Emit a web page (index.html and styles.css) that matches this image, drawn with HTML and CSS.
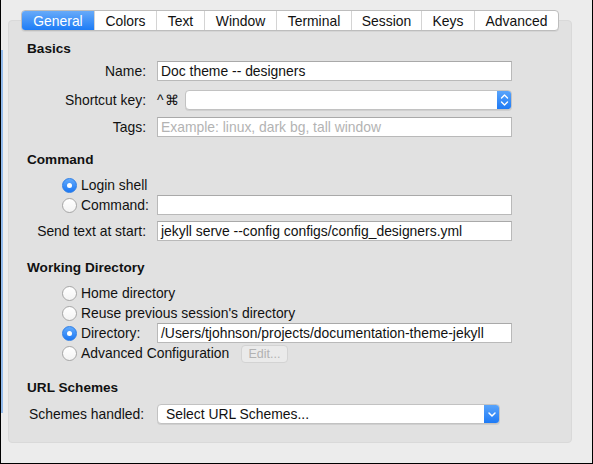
FILE: index.html
```html
<!DOCTYPE html>
<html>
<head>
<meta charset="utf-8">
<link rel="stylesheet" href="styles.css">
</head>
<body>
<div class="window">
  <div class="edge-accent"></div>
  <nav class="tabs">
    <span class="tab active t-general">General</span>
    <span class="tab t-colors">Colors</span>
    <span class="tab t-text">Text</span>
    <span class="tab t-window">Window</span>
    <span class="tab t-terminal">Terminal</span>
    <span class="tab t-session">Session</span>
    <span class="tab t-keys">Keys</span>
    <span class="tab t-advanced">Advanced</span>
  </nav>
  <section class="panel">
    <h2 class="heading h-basics">Basics</h2>
    <div class="row r-name">
      <span class="lbl">Name:</span>
      <div class="field">Doc theme -- designers</div>
    </div>
    <div class="row r-shortcut">
      <span class="lbl">Shortcut key:</span>
      <span class="mods">^⌘</span>
      <div class="popup popup-short">
        <span class="popup-text"></span>
        <span class="stepper">
          <svg width="15" height="20" viewBox="0 0 15 20"><path d="M4.5 8 L7.5 5 L10.5 8 M4.5 12 L7.5 15 L10.5 12" fill="none" stroke="#fff" stroke-width="1.4" stroke-linecap="round" stroke-linejoin="round"/></svg>
        </span>
      </div>
    </div>
    <div class="row r-tags">
      <span class="lbl">Tags:</span>
      <div class="field placeholder">Example: linux, dark bg, tall window</div>
    </div>

    <h2 class="heading h-command">Command</h2>
    <div class="row r-login">
      <span class="radio-lead"><span class="radio on"></span><span class="rlabel">Login shell</span></span>
    </div>
    <div class="row r-cmd">
      <span class="radio-lead w-input"><span class="radio"></span><span class="rlabel">Command:</span></span>
      <div class="field"></div>
    </div>
    <div class="row r-send">
      <span class="lbl">Send text at start:</span>
      <div class="field">jekyll serve --config configs/config_designers.yml</div>
    </div>

    <h2 class="heading h-wd">Working Directory</h2>
    <div class="row r-home">
      <span class="radio-lead"><span class="radio"></span><span class="rlabel">Home directory</span></span>
    </div>
    <div class="row r-reuse">
      <span class="radio-lead"><span class="radio"></span><span class="rlabel">Reuse previous session's directory</span></span>
    </div>
    <div class="row r-dir">
      <span class="radio-lead w-input"><span class="radio on"></span><span class="rlabel">Directory:</span></span>
      <div class="field">/Users/tjohnson/projects/documentation-theme-jekyll</div>
    </div>
    <div class="row r-adv">
      <span class="radio-lead w-adv"><span class="radio"></span><span class="rlabel">Advanced Configuration</span></span>
      <span class="btn-disabled">Edit...</span>
    </div>

    <h2 class="heading h-url">URL Schemes</h2>
    <div class="row r-schemes">
      <span class="lbl-left">Schemes handled:</span>
      <div class="popup popup-schemes">
        <span class="popup-text">Select URL Schemes...</span>
        <span class="stepper wide">
          <svg width="16" height="20" viewBox="0 0 16 20"><path d="M5 9 L8 12 L11 9" fill="none" stroke="#fff" stroke-width="1.5" stroke-linecap="round" stroke-linejoin="round"/></svg>
        </span>
      </div>
    </div>
  </section>
</div>
</body>
</html>
```
FILE: styles.css
```css
* { box-sizing: border-box; }
html, body { margin: 0; padding: 0; }
body {
  font-family: "Liberation Sans", Arial, sans-serif;
  font-size: 13.9px;
  color: #111;
  background: #ececec;
}
.window {
  position: relative;
  width: 593px;
  height: 464px;
  background: #ececec;
  border-left: 1px solid #000;
  border-right: 1px solid #000;
  border-bottom: 1px solid #000;
  padding-top: 10px;
}
.edge-accent {
  position: absolute;
  left: 0;
  top: 50px;
  width: 2px;
  height: 363px;
  background: #93bbec;
}
.tabs {
  position: relative;
  z-index: 1;
  display: flex;
  margin-left: 20px;
  width: 538px;
  height: 21px;
  background: #fff;
  border: 1px solid #bdbdbd;
  border-radius: 4px;
  overflow: hidden;
  box-shadow: 0 1px 0 rgba(0,0,0,0.05);
}
.tab {
  display: flex;
  align-items: center;
  justify-content: center;
  height: 100%;
  border-left: 1px solid #d4d4d4;
  font-size: 13.9px;
  color: #111;
}
.tab:first-child { border-left: none; }
.tab.active {
  background: linear-gradient(#67aaf9, #1d7cf6);
  color: #fff;
}
.t-general { width: 72px; }
.t-colors { width: 62px; }
.t-text { width: 48px; }
.t-window { width: 72px; }
.t-terminal { width: 75px; }
.t-session { width: 70px; }
.t-keys { width: 53px; }
.t-advanced { flex: 1; }

.panel {
  margin-top: -11px;
  margin-left: 7px;
  width: 564px;
  height: 423px;
  background: #e1e1e1;
  border: 1px solid #d9d9d9;
  border-radius: 4px;
  display: flex;
  flex-direction: column;
}
.heading {
  margin: 0 0 0 18px;
  height: 16px;
  line-height: 16px;
  font-size: 13.6px;
  font-weight: bold;
  color: #111;
}
.row {
  display: flex;
  align-items: center;
  height: 20px;
}
.lbl {
  width: 137px;
  margin-right: 11px;
  text-align: right;
  white-space: nowrap;
}
.field {
  width: 355px;
  height: 20px;
  background: #fff;
  border: 1px solid #b9b9b9;
  border-top-color: #a9a9a9;
  padding: 0 3px;
  line-height: 18px;
  white-space: nowrap;
  overflow: hidden;
}
.placeholder { color: #b3b3b3; }
.mods {
  width: 28px;
  padding-left: 0;
  letter-spacing: 1px;
}
.popup {
  display: flex;
  height: 20px;
  background: #fff;
  border: 1px solid #c2c2c2;
  border-radius: 4px;
  overflow: hidden;
  box-shadow: 0 1px 0 rgba(0,0,0,0.08);
}
.popup-text { flex: 1; padding-left: 8px; line-height: 18px; white-space: nowrap; }
.popup-short { width: 327px; }
.popup-schemes { width: 343px; }
.stepper {
  width: 15px;
  height: 20px;
  margin-top: -1px;
  margin-right: -1px;
  background: linear-gradient(#5ca6fb, #1b78f5);
  display: flex;
  align-items: center;
  justify-content: center;
}
.stepper.wide { width: 16px; }
.stepper svg { display: block; }

.radio-lead {
  display: flex;
  align-items: center;
  padding-left: 53px;
  white-space: nowrap;
}
.w-input { width: 148px; }
.w-adv { width: 232px; }
.radio {
  width: 15px;
  height: 15px;
  border-radius: 50%;
  background: linear-gradient(#ffffff, #f3f3f3);
  border: 1px solid #a6a6a6;
  margin-right: 4px;
  position: relative;
  flex: none;
}
.radio.on {
  background: linear-gradient(#62aafc, #1c78f4);
  border-color: #2d7ee6;
}
.radio.on::after {
  content: "";
  position: absolute;
  left: 4px;
  top: 4px;
  width: 5px;
  height: 5px;
  border-radius: 50%;
  background: #fff;
}
.btn-disabled {
  width: 47px;
  height: 18px;
  margin-top: 1px;
  border: 1px solid #d3d3d3;
  border-radius: 4px;
  background: #eaeaea;
  color: #b2b2b2;
  font-size: 12.5px;
  display: flex;
  align-items: center;
  justify-content: center;
}
.lbl-left {
  width: 148px;
  padding-left: 20px;
  white-space: nowrap;
}

.h-basics { margin-top: 20px; }
.r-name { margin-top: 4px; }
.r-shortcut { margin-top: 9px; }
.r-tags { margin-top: 7px; }
.h-command { margin-top: 15px; }
.r-login { margin-top: 7px; }
.r-cmd { margin-top: 0; }
.r-send { margin-top: 6px; }
.h-wd { margin-top: 19px; }
.r-home { margin-top: 7px; }
.h-url { margin-top: 17px; }
.r-schemes { margin-top: 8px; }
```
